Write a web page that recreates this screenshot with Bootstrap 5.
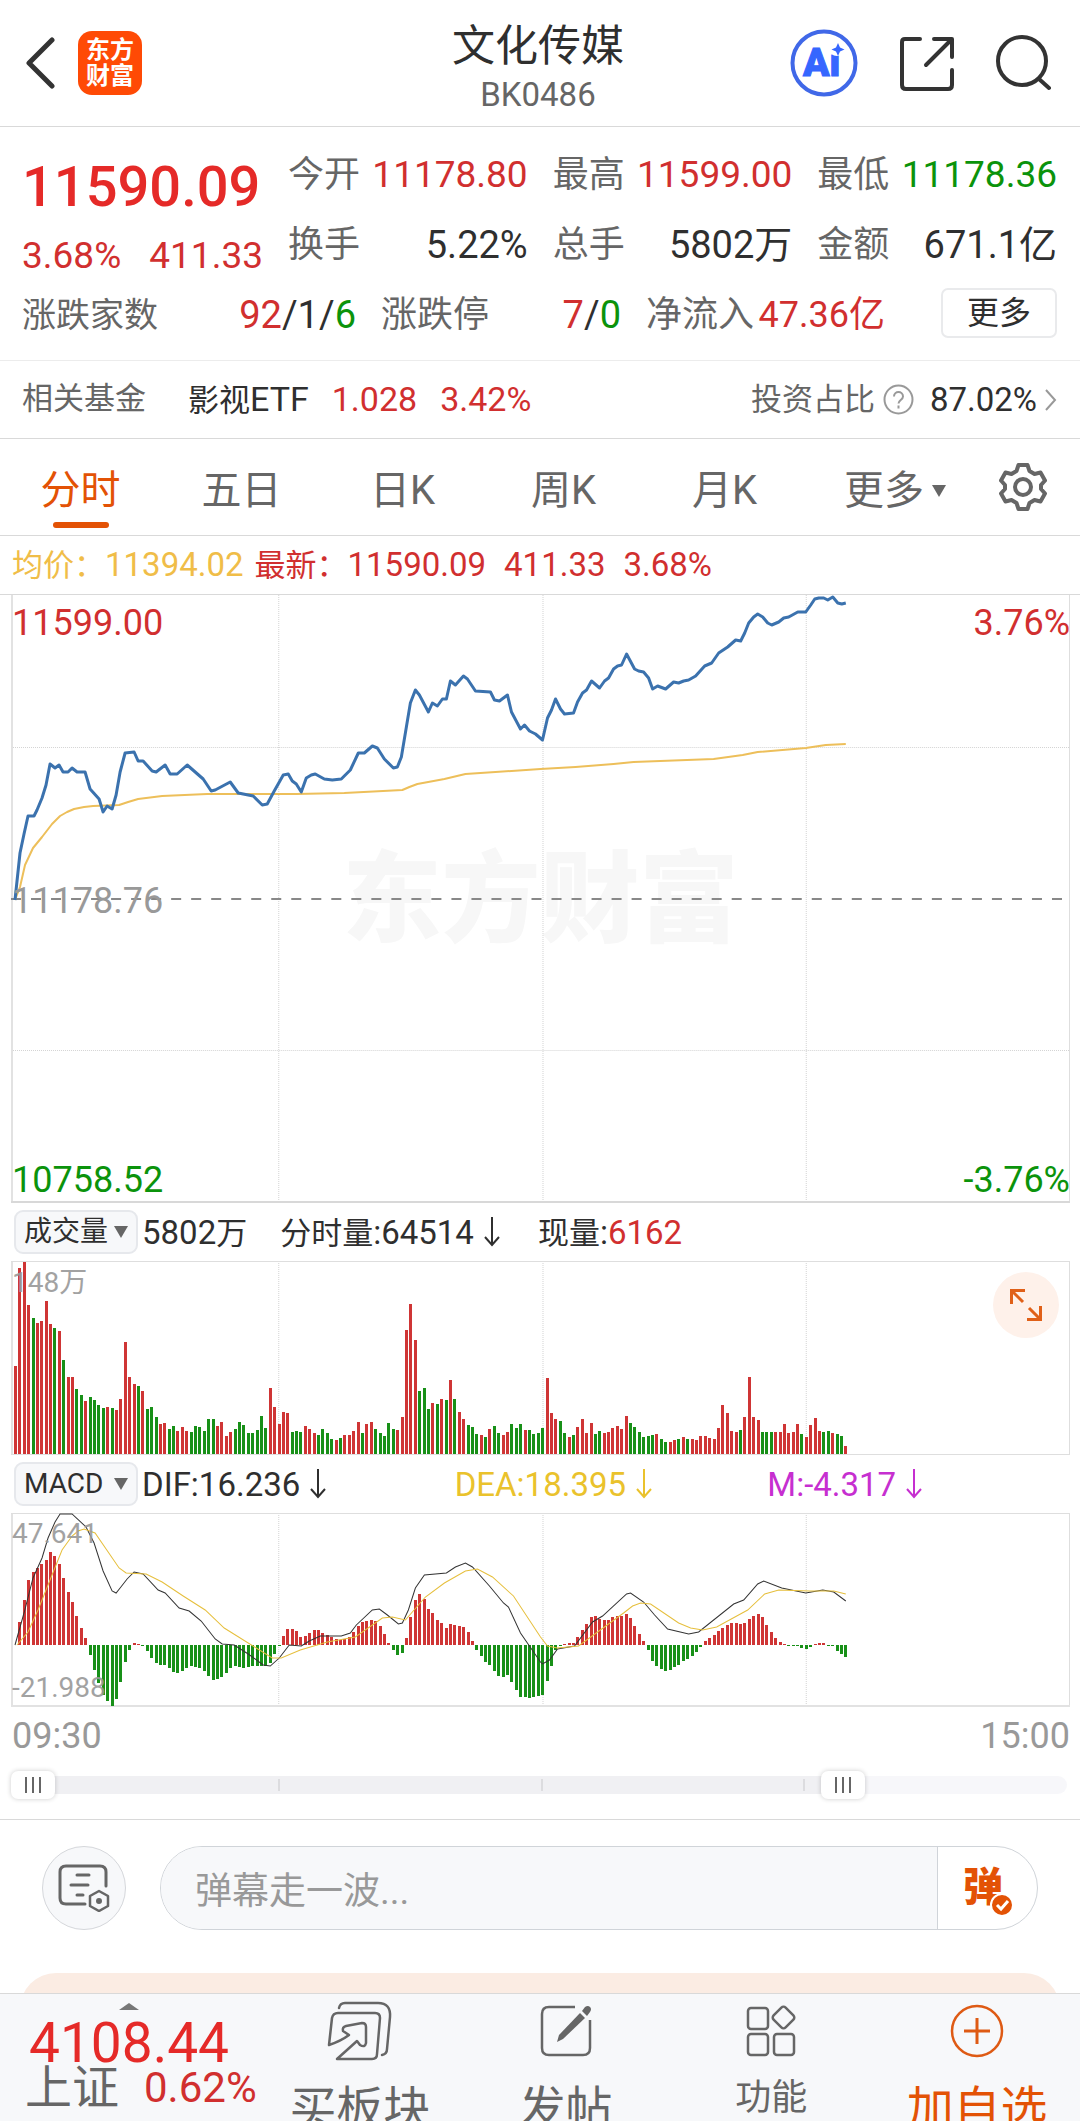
<!DOCTYPE html>
<html lang="zh-CN">
<head>
<meta charset="utf-8">
<meta name="viewport" content="width=device-width, initial-scale=1">
<title>文化传媒 BK0486</title>
<link href="https://cdn.jsdelivr.net/npm/bootstrap@5.3.0/dist/css/bootstrap.min.css" rel="stylesheet">
<style>
:root{--up:#d12f2f;--down:#0b930b;--ink:#2f2f2f;--soft:#666;--mute:#999;--rule:#d9d9d9;--brand:#e35205;--pane:#f7f8fa}
body{font-family:Roboto,"Noto Sans CJK SC",sans-serif;color:var(--ink);background:#fff;line-height:1}
a{color:inherit;text-decoration:none}
button{border:0;background:none;padding:0;color:inherit;font:inherit}
svg{display:block;flex:none}
.up{color:var(--up)}.down{color:var(--down)}.soft{color:var(--soft)}.mute{color:var(--mute)}
.s28{font-size:28px}.s31{font-size:31px}.s33{font-size:33px}.s34{font-size:34px}.s36{font-size:36px}.s37{font-size:37px}.s38{font-size:38px}
.rule-b{border-bottom:1px solid var(--rule)}
.topbar{padding:0 29px 0 25px;height:127px}
.tools{gap:42px}
.logo{width:64px;height:64px;border-radius:14px;background:#ff4a05;color:#fff;font-size:24px;font-weight:700;line-height:26px;padding-top:6px;margin-left:23px}
.title{font-size:43px;line-height:50px;font-weight:400;margin:8px 0 6px}
.code{line-height:36px}
.quote{padding:13px 23px 10px 22px;border-bottom:1px solid #ececec}
.headline{width:241px;margin-right:25px;padding-top:17px}
.last{font-size:56px;font-weight:500;line-height:60px;color:#e52a28}
.delta{line-height:48px;margin-top:15px;gap:28px}
.stats{gap:0 25px}
.stat{line-height:70px;display:flex;justify-content:space-between;flex:1 1 0;white-space:nowrap}
.grow-a{flex:334 1 0}.grow-b{flex:240 1 0}.grow-c{flex:239 1 0}
.more-cell{width:147px;margin-bottom:4px}
.more{width:116px;height:50px;border:2px solid #e9eaec;border-radius:7px;font-size:32px;line-height:44px}
.fund{padding:0 23px 0 22px;line-height:76px;height:78px}
.fund-item{gap:23px;margin-left:42px}
.tabs{height:97px;font-size:40px}
.tabs .tab{flex:161 1 0;display:flex;align-items:center;justify-content:center;height:96px;padding-top:7px;color:var(--soft);position:relative}
.tabs .tab.wide{flex:180 1 0;gap:8px}
.tabs .tab.gear{flex:0 0 95px;justify-content:flex-start;padding:0 0 0 14px}
.tabs .on{color:var(--brand)}
.tabs .on::after{content:"";position:absolute;bottom:7px;width:56px;height:6px;border-radius:3px;background:var(--brand)}
.info{padding:0 12px;line-height:58px;height:59px}
.plot{margin:0 10px 0 11px;position:relative}
.plot svg{width:100%}
.tag{position:absolute;left:1px;line-height:40px}
.tag.end{left:auto;right:0}
.water{position:absolute;left:0;right:0;top:253px;text-align:center;font-size:99px;font-weight:900;line-height:104px;color:#f7f7f7}
.sub{padding-left:14px;height:58px}
.pick{width:124px;height:44px;border:2px solid #e6e8ec;border-radius:9px;background:var(--pane);font-size:28px;display:flex;align-items:center;justify-content:space-between;padding:0 8px 0 8px}
.third{flex:1 1 0;display:flex;align-items:center;gap:10px}
.zoomer{position:absolute;right:11px;top:11px;width:66px;height:66px;border-radius:50%;background:#fef1ea;display:flex;align-items:center;justify-content:center}
.times{line-height:58px;margin:0 10px 0 12px}
.span-range{position:relative;height:28px;margin:6px 13px 20px 11px}
.span-range .rail{position:absolute;inset:5px 0;border-radius:9px;background:linear-gradient(90deg,#f0f0f3 79%,#f7f7fa 79%)}
.span-range .tick{position:absolute;top:8px;width:2px;height:12px;background:#dcdcdf}
.span-range input{position:absolute;inset:0;width:100%;height:28px;margin:0;appearance:none;background:none;pointer-events:none}
.span-range input::-webkit-slider-thumb{appearance:none;pointer-events:auto;width:44px;height:28px;border-radius:7px;box-shadow:0 0 5px rgba(0,0,0,.2);background:linear-gradient(90deg,#666 2px,transparent 2px 7px,#666 7px 9px,transparent 9px 14px,#666 14px) center/16px 16px no-repeat,#fff}
.chat{padding:26px 42px 43px;border-top:1px solid var(--rule);gap:34px}
.round-btn{width:84px;height:84px;border:1px solid #d5d7db;border-radius:50%;background:var(--pane);display:flex;align-items:center;justify-content:center;flex:none}
.pill{height:84px;border:1px solid #d0d4d9;border-radius:42px;overflow:hidden;flex:1}
.pill input{border:0;background:var(--pane);font-size:37px;padding:6px 34px 0;flex:1;min-width:0;color:var(--ink);outline:0}
.pill input::placeholder{color:var(--mute);opacity:1}
.send{width:100px;border-left:1px solid #d0d4d9;color:var(--brand);font-size:40px;font-weight:900;position:relative;text-align:left;padding-left:25px}
.send svg{position:absolute;left:52px;top:46px}
.promo{height:110px;margin:0 20px;border-radius:36px 36px 0 0;background:#fbece3}
.dock{height:128px;background:var(--pane);border-top:1px solid var(--rule);overflow:hidden}
.index{width:257px;padding:8px 0 0 29px;color:#e52a28;flex:none;white-space:nowrap}
.index .caret{margin:1px 0 8px 90px}
.index .val{font-size:55px;line-height:50px}
.index .name{font-size:47px;line-height:40px;gap:25px;margin-left:-4px}
.index .pct{font-size:42px}
.act{flex:1;display:flex;flex-direction:column;align-items:center;color:var(--soft);font-size:47px;line-height:56px;white-space:nowrap}
.act .ico{height:74px;flex:none;display:flex;align-items:center;margin-bottom:13px}
.act.small-act{font-size:36px}.act.small-act .ico{margin-bottom:2px}
.act.add{color:var(--brand)}
</style>
<script src="https://cdn.jsdelivr.net/npm/bootstrap@5.3.0/dist/js/bootstrap.bundle.min.js"></script>
</head>
<body>
<header class="topbar rule-b d-flex align-items-center">
  <div class="d-flex align-items-center flex-fill w-25">
    <button type="button" aria-label="返回"><svg width="30" height="54" viewBox="0 0 30 54" fill="none" stroke="#333" stroke-width="5" stroke-linecap="round" stroke-linejoin="round"><path d="M27 4 4 27l23 23"/></svg></button>
    <div class="logo text-center">东方<br>财富</div>
  </div>
  <div class="text-center">
    <h1 class="title">文化传媒</h1>
    <div class="code s33 soft">BK0486</div>
  </div>
  <div class="tools d-flex align-items-center justify-content-end flex-fill w-25">
    <button type="button" aria-label="AI 助手"><svg width="68" height="68" viewBox="0 0 68 68"><circle cx="34" cy="34" r="31.500" fill="none" stroke="#4068e8" stroke-width="4"/><text x="13" y="47" font-family="Roboto" font-size="39" font-weight="900" fill="#3566ff" stroke="#3566ff" stroke-width="1">Ai</text><circle cx="47" cy="19" r="8" fill="#fff"/><path d="M48 14l2 4.500 4.500 2-4.500 2-2 4.500-2-4.500-4.500-2 4.500-2z" fill="#3566ff"/></svg></button>
    <button type="button" aria-label="分享"><svg width="54" height="55" viewBox="0 0 54 55" fill="none" stroke="#333" stroke-width="4" stroke-linecap="round" stroke-linejoin="round"><path d="M20 3H5Q2 3 2 6v43q0 4 4 4h42q4 0 4-4V34M34 3h18v18M51 4 26 29"/></svg></button>
    <button type="button" aria-label="搜索"><svg width="55" height="56" viewBox="0 0 55 56" fill="none" stroke="#333" stroke-width="4" stroke-linecap="round"><circle cx="26" cy="26" r="24"/><path d="m43 44 10 9"/></svg></button>
  </div>
</header>

<main>
<section class="quote">
  <div class="d-flex">
    <div class="headline">
      <div class="last">11590.09</div>
      <div class="delta d-flex s37 up"><span>3.68%</span><span>411.33</span></div>
    </div>
    <div class="flex-fill">
      <div class="stats d-flex">
        <div class="stat"><span class="s36 soft">今开</span><span class="s37 up">11178.80</span></div>
        <div class="stat"><span class="s36 soft">最高</span><span class="s37 up">11599.00</span></div>
        <div class="stat"><span class="s36 soft">最低</span><span class="s37 down">11178.36</span></div>
      </div>
      <div class="stats d-flex">
        <div class="stat"><span class="s36 soft">换手</span><span class="s38">5.22%</span></div>
        <div class="stat"><span class="s36 soft">总手</span><span class="s38">5802万</span></div>
        <div class="stat"><span class="s36 soft">金额</span><span class="s38">671.1亿</span></div>
      </div>
    </div>
  </div>
  <div class="stats d-flex align-items-center">
    <div class="stat grow-a"><span class="s34 soft">涨跌家数</span><span class="s38"><span class="up">92</span>/1/<span class="down">6</span></span></div>
    <div class="stat grow-b"><span class="s36 soft">涨跌停</span><span class="s38"><span class="up">7</span>/<span class="down">0</span></span></div>
    <div class="stat grow-c"><span class="s36 soft">净流入</span><span class="s36 up">47.36亿</span></div>
    <div class="more-cell text-end"><button type="button" class="more">更多</button></div>
  </div>
</section>

<section class="fund rule-b d-flex s34">
  <span class="s31 soft">相关基金</span>
  <a href="#" class="fund-item d-flex"><span class="s31">影视<span class="s34">ETF</span></span><span class="up">1.028</span><span class="up">3.42%</span></a>
  <a href="#" class="d-flex align-items-center ms-auto"><span class="s31 soft">投资占比</span>
    <svg class="ms-2 me-3" width="31" height="31" viewBox="0 0 31 31" fill="none" stroke="#999" stroke-width="2"><circle cx="15.500" cy="15.500" r="14"/><path d="M11 12.500c0-6 9-6 9 0 0 3.500-4.500 3.500-4.500 7M15.500 21.500v3"/></svg>
    <span class="s33">87.02%</span>
    <svg class="ms-2" width="12" height="24" viewBox="0 0 12 24" fill="none" stroke="#999" stroke-width="2"><path d="m1 2 9 10-9 10"/></svg></a>
</section>

<nav class="tabs rule-b d-flex" aria-label="周期">
  <a href="#" class="tab on">分时</a><a href="#" class="tab">五日</a><a href="#" class="tab">日K</a><a href="#" class="tab">周K</a><a href="#" class="tab">月K</a>
  <a href="#" class="tab wide">更多<svg width="14" height="12" viewBox="0 0 14 12"><path d="M0 0h14L7 12z" fill="#666"/></svg></a>
  <a href="#" class="tab gear" aria-label="设置"><svg width="48" height="48" viewBox="0 0 48 48" fill="none" stroke="#666" stroke-width="4" stroke-linejoin="round"><path d="M19.500 2h9l2 6 5 3 6-1.500 4.500 8-4 4.500v4l4 4.500-4.500 8-6-1.500-5 3-2 6h-9l-2-6-5-3-6 1.500-4.500-8 4-4.500v-4l-4-4.500 4.500-8 6 1.500 5-3z"/><circle cx="24" cy="24" r="8"/></svg></a>
</nav>

<div class="info rule-b s33 d-flex">
  <span style="color:#f0bd48"><span class="s31">均价：</span>11394.02</span>
  <span class="up d-flex" style="gap:18px;margin-left:11px"><span><span class="s31">最新：</span>11590.09</span><span>411.33</span><span>3.68%</span></span>
</div>

<section class="plot">
  <div class="water" aria-hidden="true">东方财富</div>
  <svg class="position-relative" height="608" viewBox="11 595 1058 608" preserveAspectRatio="none" fill="none">
    <g stroke="#d4d4d4" stroke-dasharray="1 1"><path d="M278.500 595v607M542.500 595v607M805.500 595v607M11 747.500h1058M11 1050.500h1058"/></g>
    <path d="M12 595v607" stroke="#e2e2e2" stroke-width="2"/><path d="M1068.500 595v607" stroke="#dedede"/><path d="M11 1202h1058" stroke="#d8d8d8" stroke-width="2"/>
    <path d="M11 899h1052" stroke="#888" stroke-width="2" stroke-dasharray="10 10"/>
    <polyline stroke="#edbf5a" stroke-width="2" stroke-linejoin="round" points="15,900 20,887 25,865 33,848 42,837 52,824 60,816 67,812 74,809 84,807 93,806 119,805 128,802 138,799 162,796 207,794 241,794 296,794 344,793 402,790 409,787 417,784 444,779 465,774 495,772 540,769 575,767 613,764 633,762 713,759 742,755 757,752 805,748 825,745 845,744"/>
    <polyline stroke="#3b72ae" stroke-width="3" stroke-linejoin="round" points="15,900 20,853 24,834 28,816 34,816 37,810 42,798 46,785 50,764 55,768 59,765 63,772 68,772 72,768 77,772 85,772 90,789 99,799 103,812 107,806 112,809 116,795 120,772 125,753 134,752 138,761 143,761 152,771 156,772 165,765 170,774 177,774 187,765 203,779 211,791 215,790 230,782 238,793 253,796 262,805 267,804 274,791 283,775 288,774 292,781 296,784 301,792 306,778 311,775 315,774 324,779 332,780 341,779 350,770 358,753 364,753 372,746 377,748 384,759 393,768 397,767 401,757 406,727 410,703 415,690 419,695 428,712 432,703 437,706 442,699 446,699 450,681 455,685 463,676 467,679 475,691 490,692 494,700 499,701 507,695 511,712 520,729 524,725 529,731 535,734 542,740 547,718 551,710 555,699 560,709 564,714 573,713 577,702 582,693 586,690 591,681 599,688 604,681 608,678 613,669 617,666 621,665 626,654 634,669 638,671 643,672 648,678 652,689 657,686 665,689 673,682 678,683 683,681 688,680 695,676 704,666 711,663 718,653 727,647 735,640 740,641 744,633 748,623 753,617 757,614 762,617 767,623 771,625 778,622 783,618 788,617 797,612 805,612 810,605 814,599 818,598 823,598 827,600 832,597 837,603 841,604 845,603"/>
  </svg>
  <div class="tag s36 up" style="top:8px">11599.00</div><div class="tag end s36 up" style="top:8px">3.76%</div>
  <div class="tag s36 mute" style="top:286px">11178.76</div>
  <div class="tag s36 down" style="top:565px">10758.52</div><div class="tag end s36 down" style="top:565px">-3.76%</div>
</section>

<div class="sub d-flex align-items-center s33">
  <button type="button" class="pick"><span>成交量</span><svg width="14" height="12" viewBox="0 0 14 12"><path d="M0 0h14L7 12z" fill="#666"/></svg></button>
  <span class="ms-1">5802<span class="s31">万</span></span>
  <span class="d-flex align-items-center" style="margin-left:33px;gap:10px"><span><span class="s31">分时量</span>:64514</span><svg width="16" height="30" viewBox="0 0 16 30" fill="none" stroke="#2f2f2f" stroke-width="2"><path d="M8 0v28M1 20l7 8 7-8"/></svg></span>
  <span style="margin-left:38px"><span class="s31">现量</span>:<span class="up">6162</span></span>
</div>
<section class="plot">
  <svg height="194" viewBox="11 1261 1058 194" preserveAspectRatio="none" fill="none">
    <path d="M278.500 1261v193M542.500 1261v193M805.500 1261v193" stroke="#d4d4d4" stroke-dasharray="1 1"/>
    <path d="M12 1261v193" stroke="#e2e2e2" stroke-width="2"/><path d="M11 1261.500h1058M1068.500 1261v193M11 1454.500h1058" stroke="#dedede"/>
    <g id="volume" shape-rendering="crispEdges"></g>
  </svg>
  <div class="tag s28 mute" style="top:2px;opacity:.9">148万</div>
  <button type="button" class="zoomer" aria-label="全屏"><svg style="width:32px" height="32" viewBox="0 0 32 32" fill="none" stroke="#e06018" stroke-width="3"><path d="M1.500 15V1.500H15M2 2l11 11M30.500 17v13.500H17M30 30 19 19"/></svg></button>
</section>

<div class="sub d-flex align-items-center s33">
  <button type="button" class="pick"><span>MACD</span><svg width="14" height="12" viewBox="0 0 14 12"><path d="M0 0h14L7 12z" fill="#666"/></svg></button>
  <div class="d-flex flex-fill ms-1">
    <span class="third">DIF:16.236<svg width="16" height="30" viewBox="0 0 16 30" fill="none" stroke="#2f2f2f" stroke-width="2"><path d="M8 0v28M1 20l7 8 7-8"/></svg></span>
    <span class="third" style="color:#eac22c">DEA:18.395<svg width="16" height="30" viewBox="0 0 16 30" fill="none" stroke="#eac22c" stroke-width="2"><path d="M8 0v28M1 20l7 8 7-8"/></svg></span>
    <span class="third" style="color:#c62fd0">M:-4.317<svg width="16" height="30" viewBox="0 0 16 30" fill="none" stroke="#c62fd0" stroke-width="2"><path d="M8 0v28M1 20l7 8 7-8"/></svg></span>
  </div>
</div>
<section class="plot">
  <svg height="194" viewBox="11 1513 1058 194" preserveAspectRatio="none" fill="none">
    <path d="M278.500 1513v193M542.500 1513v193M805.500 1513v193" stroke="#d4d4d4" stroke-dasharray="1 1"/>
    <path d="M12 1513v193" stroke="#e2e2e2" stroke-width="2"/><path d="M11 1513.500h1058M1068.500 1513v193" stroke="#dedede"/><path d="M11 1706h1058" stroke="#e2e2e2" stroke-width="2"/>
    <g id="macd" shape-rendering="crispEdges"></g>
    <polyline stroke="#333" points="15,1645 24,1613 33,1578 42,1558 48,1538 55,1522 60,1514 72,1514 86,1527 94,1543 103,1571 112,1591 116,1593 120,1588 127,1579 134,1572 143,1574 158,1590 165,1593 179,1608 189,1611 201,1621 215,1639 222,1644 234,1645 248,1654 263,1665 270,1666 279,1658 289,1645 301,1646 309,1641 320,1636 341,1636 350,1633 356,1625 372,1610 379,1609 387,1615 398,1624 402,1623 408,1610 415,1588 424,1575 446,1573 455,1567 465,1563 472,1567 489,1586 503,1603 508,1607 520,1633 540,1662 542,1664 549,1660 557,1649 574,1646 592,1622 602,1616 626,1594 630,1593 643,1602 654,1615 667,1629 688,1634 698,1632 733,1604 743,1600 757,1584 763,1581 781,1588 805,1593 822,1590 833,1592 845,1601"/>
    <polyline stroke="#e6bf3c" points="17,1645 28,1632 38,1610 52,1575 62,1550 72,1536 78,1531 84,1529 95,1533 119,1568 126,1573 146,1574 162,1582 183,1596 205,1610 224,1628 272,1658 281,1658 300,1650 327,1642 355,1637 382,1618 392,1617 405,1620 425,1597 444,1583 465,1571 477,1569 492,1577 513,1596 540,1637 547,1646 557,1648 578,1646 623,1613 632,1606 640,1603 650,1604 678,1623 690,1628 702,1630 716,1627 747,1610 764,1594 778,1590 809,1591 833,1591 845,1594"/>
  </svg>
  <div class="tag s28 mute" style="top:1px;opacity:.9">47.641</div>
  <div class="tag s28 mute" style="top:155px;opacity:.9">-21.988</div>
</section>
<div class="times d-flex justify-content-between s36 mute"><span>09:30</span><span>15:00</span></div>
<div class="span-range">
  <div class="rail"></div>
  <i class="tick" style="left:25.300%"></i><i class="tick" style="left:50.200%"></i><i class="tick" style="left:75%"></i>
  <input type="range" value="0" aria-label="起始时间"><input type="range" value="80" aria-label="结束时间">
</div>

<form class="chat d-flex">
  <button type="button" class="round-btn" aria-label="弹幕设置"><svg width="52" height="48" viewBox="0 0 52 48" fill="none" stroke="#666" stroke-width="3" stroke-linecap="round"><path d="M48 22V8q0-6-6-6H8Q2 2 2 8v26q0 6 6 6h19M19 11h12M13 21h17M19 31h6"/><path d="M41 27l9 5v10l-9 5-9-5V32z" stroke-linejoin="round" stroke-width="2.500"/><circle cx="41" cy="37" r="1.500"/></svg></button>
  <div class="pill d-flex">
    <input type="text" placeholder="弹幕走一波..." aria-label="弹幕">
    <button type="button" class="send" aria-label="弹幕开关">弹<svg width="24" height="24" viewBox="0 0 24 24"><circle cx="12" cy="12" r="11" fill="#e35205" stroke="#fff" stroke-width="2"/><path d="m7 12 4 4 7-8" fill="none" stroke="#fff" stroke-width="3"/></svg></button>
  </div>
</form>
<div class="promo"></div>
</main>

<footer class="dock fixed-bottom d-flex">
  <a href="#" class="index">
    <svg class="caret" width="20" height="7" viewBox="0 0 20 7"><path d="M0 7h20L10 0z" fill="#777"/></svg>
    <div class="val">4108.44</div>
    <div class="name d-flex"><span class="soft">上证</span><span class="pct up">0.62%</span></div>
  </a>
  <a href="#" class="act"><span class="ico"><svg width="66" height="60" viewBox="0 0 66 60" fill="none" stroke="#666" stroke-width="2.500" stroke-linejoin="round" stroke-linecap="round"><path d="M12 7q1-5 6-5h33q13 0 12 14l-3 32q0 5-5 6"/><path d="M2 44 5 17q1-5 6-5h37q5 0 5 5l-3 36q0 5-5 5H10l20-18 3 4q5 3 6-2V26q0-4-4-4l-16 3q-4 1-3 5l6 4Q14 40 2 44z"/></svg></span>买板块</a>
  <a href="#" class="act"><span class="ico"><svg width="54" height="54" viewBox="0 0 54 54" fill="none" stroke="#666" stroke-width="2.500"><path d="M36 3H10q-7 0-7 7v34q0 7 7 7h34q7 0 7-7V16"/><path d="m41 9 5 5-22 21-6 3 2-7z" fill="#666" stroke="none"/><path d="m43 7 3-4q3-2 5 0t0 5l-3 4z" fill="#666" stroke="none"/></svg></span>发帖</a>
  <a href="#" class="act small-act"><span class="ico"><svg width="50" height="52" viewBox="0 0 50 52" fill="none" stroke="#666" stroke-width="2.500"><rect x="2" y="3" width="20" height="21" rx="3"/><rect x="2" y="29" width="20" height="21" rx="3"/><rect x="28" y="29" width="20" height="21" rx="3"/><rect x="29" y="4" width="17" height="17" rx="3" transform="rotate(45 37.500 12.500)"/></svg></span>功能</a>
  <a href="#" class="act add"><span class="ico"><svg width="54" height="54" viewBox="0 0 54 54" fill="none" stroke="#de5a14" stroke-width="2.500"><circle cx="27" cy="27" r="25"/><path d="M14 27h26M27 14v26" stroke-width="3"/></svg></span>加自选</a>
</footer>

<script>
// One bar per trading minute; 241 slots across the session.
const STEP = 1058 / 241, LEFT = 11;
function bar(g, i, y, h, up) {
  const r = document.createElementNS('http://www.w3.org/2000/svg', 'rect');
  r.setAttribute('x', (LEFT + STEP * (i + 1) - 1.5).toFixed(1));
  r.setAttribute('y', y); r.setAttribute('width', 3); r.setAttribute('height', h);
  r.setAttribute('fill', up ? '#cf3535' : '#189018');
  g.appendChild(r);
}
// Volume: r = rising, g = falling; the number is the level below the 792 floor, in thirds of a pixel.
const volume = `r528 r234 r216 r344 g385 r400 r392 r334 r402 g413 r424 g511 r562 r561 g597 g615 r632 g620 g631 g646 g654 r651 g655 r661 r627 r456 r561 r582 g588 r603 g657 g652 g680 r702 r700 g716 g708 r724 r711 r723 g727 g709 g710 g724 g688 g687 r708 r695 r738 r726 g716 g696 g706 g729 g728 g720 g678 g713 r595 r652 r702 r666 r668 g727 g723 g726 r707 r718 r729 g734 g717 g729 g748 r749 g744 r735 r735 r724 r697 g730 r702 r697 g717 g729 g738 g698 g717 r720 r680 r421 r342 r451 g602 g594 g658 r640 g641 r626 g629 r570 g627 r665 r686 g704 g710 g732 r734 g741 r716 g709 g730 r734 r726 g702 g714 g701 r721 g721 g732 g729 g715 r564 r669 r686 g694 g728 r741 g736 r711 r686 r729 r699 g731 g723 r730 r727 r713 r709 r718 r678 g700 g711 g727 g742 g738 g734 r732 g747 g756 r755 r751 g746 r741 g746 r748 r750 r739 r739 r744 r747 r714 r645 r670 r723 r726 g719 r680 r562 r680 r690 g725 g725 g725 r726 r727 r703 r728 r726 r702 g733 r741 r705 r684 r723 g725 g724 r728 g732 g738 r767`.split(' ');
const vg = document.getElementById('volume');
volume.forEach((t, i) => { const h = Math.round((792 - t.slice(1)) / 3); bar(vg, i, 1454 - h, h, t[0] === 'r'); });
// MACD histogram, in thirds of a pixel either side of the zero line.
const macd = [0,68,134,195,220,231,244,255,278,266,244,202,160,128,87,51,20,-31,-75,-114,-150,-169,-182,-163,-112,-51,-14,7,2,-4,-19,-38,-54,-61,-60,-70,-80,-83,-78,-68,-64,-65,-70,-78,-94,-104,-103,-96,-83,-69,-64,-67,-68,-66,-64,-62,-64,-62,-53,-28,-2,28,49,49,42,25,28,37,44,46,37,30,23,19,14,17,24,38,58,68,71,75,71,58,34,6,-16,-29,-23,20,84,136,153,139,108,96,76,67,51,64,60,56,53,39,12,-16,-34,-51,-60,-79,-92,-96,-89,-110,-134,-155,-157,-160,-157,-152,-149,-108,-64,-15,-1,2,7,7,24,46,64,84,86,77,75,75,83,88,86,94,82,56,32,11,-14,-47,-62,-71,-79,-76,-66,-61,-49,-43,-34,-22,-6,11,20,30,43,52,60,65,67,62,65,78,87,93,84,61,39,21,10,4,-2,-4,-4,-10,-13,-7,2,7,6,-2,-4,-17,-28,-35];
const mg = document.getElementById('macd');
macd.forEach((v, i) => { if (!v) return; const h = Math.max(1, Math.round(Math.abs(v) / 3)); bar(mg, i, v > 0 ? 1645 - h : 1645, h, v > 0); });
</script>
</body>
</html>
